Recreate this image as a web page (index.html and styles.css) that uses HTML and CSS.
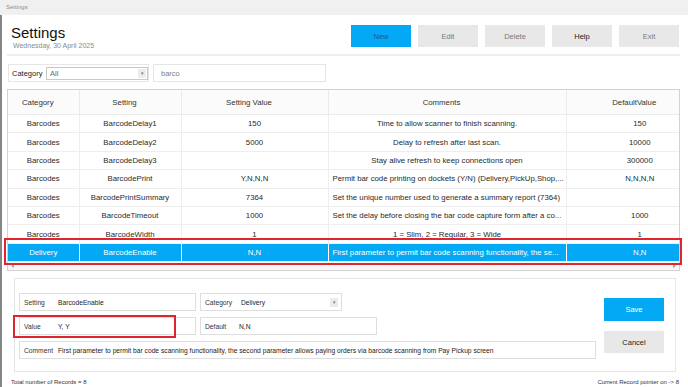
FILE: index.html
```html
<!DOCTYPE html>
<html lang="en">
<head>
    <meta charset="UTF-8">
    <meta name="viewport" content="width=device-width, initial-scale=1.0">
    <title>Settings</title>
    <link rel="stylesheet" href="styles.css">
</head>
<body>
    <div class="titlebar">Settings</div>
    <div class="window">
        <div class="top">
            <div class="heading">
                <h1>Settings</h1>
                <div class="date">Wednesday, 30 April 2025</div>
            </div>
            <div class="actions">
                <button class="btn primary">New</button>
                <button class="btn">Edit</button>
                <button class="btn">Delete</button>
                <button class="btn strong">Help</button>
                <button class="btn">Exit</button>
            </div>
        </div>

        <div class="filter">
            <div class="cat-box">
                <span class="cat-label">Category</span>
                <div class="select">
                    <span>All</span>
                    <span class="arrow">&#9662;</span>
                </div>
            </div>
            <div class="search">barco</div>
        </div>

        <div class="grid-wrap">
            <div class="grid-scroll">
                <table class="grid">
                    <colgroup>
                        <col style="width: 71px">
                        <col style="width: 102px">
                        <col style="width: 147px">
                        <col style="width: 238px">
                        <col style="width: 147px">
                    </colgroup>
                    <thead>
                        <tr>
                            <th>Category</th>
                            <th>Setting</th>
                            <th>Setting Value</th>
                            <th>Comments</th>
                            <th>DefaultValue</th>
                        </tr>
                    </thead>
                    <tbody>
                        <tr>
                            <td>Barcodes</td>
                            <td>BarcodeDelay1</td>
                            <td>150</td>
                            <td>Time to allow scanner to finish scanning.</td>
                            <td>150</td>
                        </tr>
                        <tr>
                            <td>Barcodes</td>
                            <td>BarcodeDelay2</td>
                            <td>5000</td>
                            <td>Delay to refresh after last scan.</td>
                            <td>10000</td>
                        </tr>
                        <tr>
                            <td>Barcodes</td>
                            <td>BarcodeDelay3</td>
                            <td></td>
                            <td>Stay alive refresh to keep connections open</td>
                            <td>300000</td>
                        </tr>
                        <tr>
                            <td>Barcodes</td>
                            <td>BarcodePrint</td>
                            <td>Y,N,N,N</td>
                            <td class="long">Permit bar code printing on dockets (Y/N) (Delivery,PickUp,Shop,...</td>
                            <td>N,N,N,N</td>
                        </tr>
                        <tr>
                            <td>Barcodes</td>
                            <td>BarcodePrintSummary</td>
                            <td>7364</td>
                            <td class="long">Set the unique number used to generate a summary report (7364)</td>
                            <td></td>
                        </tr>
                        <tr>
                            <td>Barcodes</td>
                            <td>BarcodeTimeout</td>
                            <td>1000</td>
                            <td class="long">Set the delay before closing the bar code capture form after a co...</td>
                            <td>1000</td>
                        </tr>
                        <tr>
                            <td>Barcodes</td>
                            <td>BarcodeWidth</td>
                            <td>1</td>
                            <td>1 = Slim, 2 = Regular, 3 = Wide</td>
                            <td>1</td>
                        </tr>
                        <tr class="selected">
                            <td>Delivery</td>
                            <td>BarcodeEnable</td>
                            <td>N,N</td>
                            <td class="long">First parameter to permit bar code scanning functionality, the se...</td>
                            <td>N,N</td>
                        </tr>
                    </tbody>
                </table>
            </div>
            <div class="hscroll">
                <span class="tri left"></span>
                <span class="tri right"></span>
            </div>
            <!-- highlight around the selected row -->
            <div class="mark mark-row"></div>
        </div>

        <div class="editor">
            <div class="fields">
                <div class="field-row">
                    <div class="field w-wide">
                        <span class="label">Setting</span>
                        <span>BarcodeEnable</span>
                    </div>
                    <div class="field w-cat">
                        <span class="label cat">Category</span>
                        <span>Delivery</span>
                        <span class="arrow">&#9662;</span>
                    </div>
                </div>
                <div class="field-row">
                    <div class="field w-wide">
                        <span class="label">Value</span>
                        <span>Y, Y</span>
                    </div>
                    <div class="field w-wide">
                        <span class="label">Default</span>
                        <span>N,N</span>
                    </div>
                </div>
                <div class="field w-full">
                    <span class="label">Comment</span>
                    <span>First parameter to permit bar code scanning functionality, the second parameter allows paying orders via barcode scanning from Pay Pickup screen</span>
                </div>
            </div>
            <div class="editor-actions">
                <button class="btn save">Save</button>
                <button class="btn cancel">Cancel</button>
            </div>
            <!-- highlight around the value field -->
            <div class="mark mark-value"></div>
        </div>

        <div class="status">
            <span>Total number of Records = 8</span>
            <span>Current Record pointer on -&gt; 8</span>
        </div>
    </div>
</body>
</html>
```

FILE: styles.css
```css
:root {
    --blue: #03a9f4;
    --btn-grey: #e8e8e8;
    --line: #e6e6e6;
    --mark: #e1252f;
}

body {
    margin: 0;
    font-family: "Liberation Sans", Arial, sans-serif;
    background: #ffffff;
    color: #222222;
}

.titlebar {
    height: 15px;
    line-height: 15px;
    padding-left: 6px;
    font-size: 6px;
    color: #8c8c8c;
    background: #f0f0f0;
}

.window {
    position: relative;
    height: 372px;
    box-sizing: border-box;
    border-left: 2px solid #858585;
    padding: 0 8px 0 5px;
}

/* header */
.top {
    display: flex;
    justify-content: space-between;
    align-items: flex-start;
    height: 39px;
    border-bottom: 2px solid #eeeeee;
}

.heading {
    padding: 9px 0 0 4px;
}

h1 {
    margin: 0;
    font-size: 15px;
    line-height: 17px;
    font-weight: normal;
    color: #111111;
}

.date {
    font-size: 7px;
    line-height: 9px;
    color: #8a8a8a;
    padding-left: 2px;
}

.actions {
    display: flex;
    gap: 7px;
    margin-top: 10px;
    margin-right: 1px;
}

.btn {
    width: 60px;
    height: 22px;
    border: none;
    padding: 0;
    background: var(--btn-grey);
    color: #7a7a7a;
    font-family: inherit;
    font-size: 7.5px;
}

.btn.primary {
    background: var(--blue);
    color: #1d5b86;
}

.btn.strong {
    color: #222222;
}

/* filter row */
.filter {
    display: flex;
    gap: 4px;
    margin: 8px 0 7px 1px;
    font-size: 7.5px;
}

.cat-box {
    display: flex;
    align-items: center;
    width: 141px;
    height: 18px;
    box-sizing: border-box;
    border: 1px solid var(--line);
    padding-left: 3px;
}

.cat-label {
    width: 34px;
    color: #222222;
}

.select {
    display: flex;
    align-items: center;
    justify-content: space-between;
    width: 102px;
    height: 13px;
    box-sizing: border-box;
    border: 1px solid #c8c8c8;
    padding: 0 1px 0 3px;
    color: #666666;
}

.arrow {
    display: flex;
    align-items: center;
    justify-content: center;
    width: 8px;
    height: 9px;
    background: #ececec;
    color: #777777;
    font-size: 5px;
}

.search {
    display: flex;
    align-items: center;
    width: 173px;
    height: 18px;
    box-sizing: border-box;
    border: 1px solid var(--line);
    padding-left: 7px;
    color: #808080;
}

/* grid */
.grid-wrap {
    position: relative;
    border: 1px solid #d2d2d2;
}

.grid-scroll {
    overflow: hidden;
}

.grid {
    width: 705px;
    table-layout: fixed;
    border-collapse: collapse;
    font-size: 7.8px;
}

.grid th {
    height: 24px;
    padding: 0 11px 0 0;
    font-weight: normal;
    color: #333333;
    background: #fbfbfb;
    border-right: 1px solid #ebebeb;
    border-bottom: 1px solid #ebebeb;
}

.grid td {
    height: 17.4px;
    padding: 0 4px;
    text-align: center;
    white-space: nowrap;
    overflow: hidden;
    color: #2a2a2a;
    border-right: 1px solid #eeeeee;
    border-bottom: 1px solid #eeeeee;
}

.grid th:last-child, .grid td:last-child {
    border-right: none;
}

.grid td.long {
    text-align: left;
}

.grid tr.selected td {
    background: var(--blue);
    color: #ffffff;
    border-right-color: rgba(255, 255, 255, 0.45);
}

.hscroll {
    display: flex;
    justify-content: space-between;
    align-items: center;
    height: 8px;
    padding: 0 3px;
    background: #f7f7f7;
}

.tri {
    width: 0;
    height: 0;
    border-top: 2px solid transparent;
    border-bottom: 2px solid transparent;
}

.tri.left {
    border-right: 3px solid #a8a8a8;
}

.tri.right {
    border-left: 3px solid #a8a8a8;
}

.mark {
    position: absolute;
    box-sizing: border-box;
    border: 2px solid var(--mark);
}

.mark-row {
    left: -4px;
    top: 148px;
    width: 678px;
    height: 27px;
}

/* editor panel */
.editor {
    position: relative;
    display: flex;
    height: 94px;
    box-sizing: border-box;
    margin: 7px 4px 0 7px;
    border: 1px solid var(--line);
    padding: 14px 0 0 4px;
}

.fields {
    display: flex;
    flex-direction: column;
    gap: 6px;
    width: 577px;
}

.field-row {
    display: flex;
    gap: 4px;
}

.field {
    display: flex;
    align-items: center;
    height: 18px;
    box-sizing: border-box;
    border: 1px solid #dedede;
    padding-left: 4px;
    font-size: 6.7px;
    white-space: nowrap;
    overflow: hidden;
}

.field .label {
    width: 34px;
    flex-shrink: 0;
    color: #333333;
}

.field .label.cat {
    width: 36px;
}

.w-wide {
    width: 177px;
}

.w-cat {
    width: 142px;
}

.w-cat .arrow {
    margin-left: auto;
    margin-right: 3px;
}

.w-full {
    width: 577px;
}

.editor-actions {
    display: flex;
    flex-direction: column;
    gap: 10px;
    margin-left: 8px;
    padding-top: 5px;
}

.btn.save {
    height: 23px;
    background: var(--blue);
    color: #ffffff;
}

.btn.cancel {
    color: #222222;
}

.mark-value {
    left: -2px;
    top: 36px;
    width: 163px;
    height: 23px;
}

/* footer */
.status {
    display: flex;
    justify-content: space-between;
    margin-top: 7px;
    padding: 0 1px 0 4px;
    font-size: 6px;
    color: #333333;
}
```
